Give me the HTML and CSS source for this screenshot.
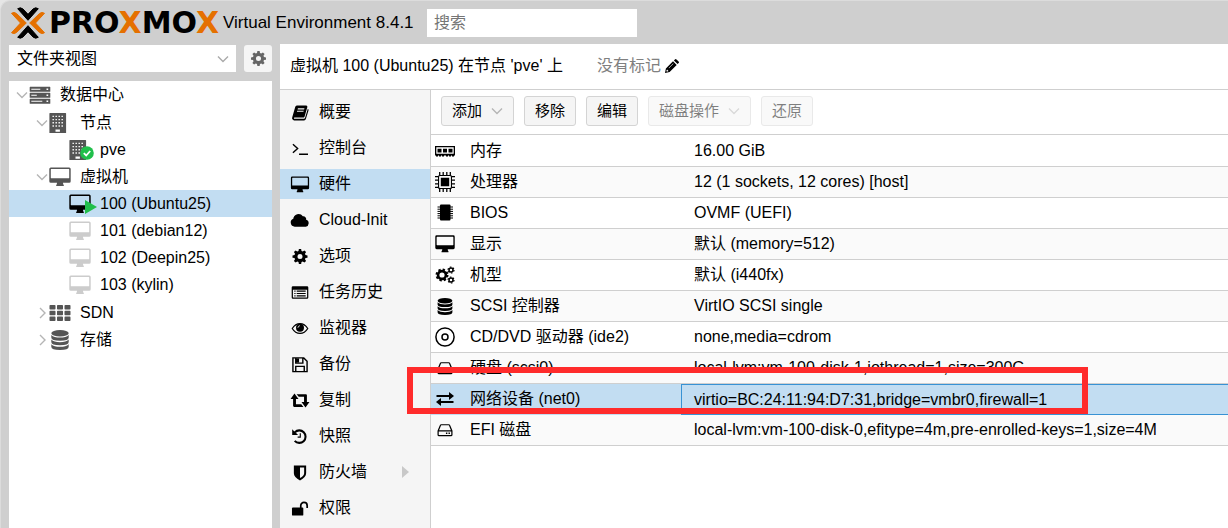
FILE: index.html
```html
<!DOCTYPE html>
<html lang="zh-CN">
<head>
<meta charset="utf-8">
<title>Proxmox Virtual Environment</title>
<link rel="stylesheet" href="styles.css">
</head>
<body>
<svg class="sprite" aria-hidden="true">
  <symbol id="chev-down" viewBox="0 0 12 12"><path d="M1 3.5l5 5 5-5" fill="none" stroke="currentColor" stroke-width="1.4"/></symbol>
  <symbol id="chev-right" viewBox="0 0 12 12"><path d="M4 1l5 5-5 5" fill="none" stroke="currentColor" stroke-width="1.4"/></symbol>
  <symbol id="gear" viewBox="0 0 16 16"><path fill-rule="evenodd" d="M6.8 0h2.4l.4 2.1 1.3.55L12.7 1.5l1.8 1.8-1.2 1.8.55 1.3L16 6.8v2.4l-2.15.4-.55 1.3 1.2 1.8-1.8 1.8-1.8-1.2-1.3.55L9.2 16H6.8l-.4-2.15-1.3-.55-1.8 1.2-1.8-1.8 1.2-1.8-.55-1.3L0 9.2V6.8l2.15-.4.55-1.3-1.2-1.8 1.8-1.8 1.8 1.15 1.3-.55zM8 5.3a2.7 2.7 0 1 0 0 5.4 2.7 2.7 0 0 0 0-5.4z"/></symbol>
  <symbol id="server" viewBox="0 0 22 18"><path fill-rule="evenodd" d="M1.200.7h19.600q.5 0 .5.5v4q0 .5-.5.500H1.200q-.5 0-.5-.5v-4q0-.5.5-.5zM2.300 2.700v1h9v-1zM17.500 2.500v1.400h1.700V2.500zM1.200 6.700h19.600q.5 0 .5.500v4q0 .5-.5.500H1.200q-.5 0-.5-.5v-4q0-.5.5-.5zM2.300 8.700v1h5.500v-1zM17.500 8.500v1.400h1.700V8.500zM1.200 12.700h19.600q.5 0 .5.500v4q0 .5-.5.500H1.200q-.5 0-.5-.5v-4q0-.5.5-.5zM2.300 14.700v1h11v-1zM17.500 14.500v1.400h1.700v-1.400z"/></symbol>
  <symbol id="building" viewBox="0 0 18 20"><path fill-rule="evenodd" d="M1 0h15.500q.6 0 .6.6V20H.4V.6Q.4 0 1 0zM3.500 2.700v1.400h1.400V2.700zm3 0v1.400h1.400V2.700zm3 0v1.400h1.400V2.700zm3 0v1.400h1.400V2.700zM3.500 5.900v1.400h1.400V5.900zm3 0v1.400h1.400V5.900zm3 0v1.400h1.400V5.900zm3 0v1.400h1.400V5.900zM3.500 9.100v1.400h1.400V9.100zm3 0v1.400h1.400V9.100zm3 0v1.400h1.400V9.100zm3 0v1.400h1.400V9.100zM3.500 12.300v1.400h1.400v-1.400zm3 0v1.400h1.400v-1.400zm3 0v1.400h1.400v-1.400zm3 0v1.400h1.400v-1.400zM6.500 16.500v2.200h4.400v-2.200z"/></symbol>
  <symbol id="desktop" viewBox="0 0 22 20"><path fill-rule="evenodd" d="M1.800.5h18.400q1.500 0 1.500 1.500v12.200q0 1.500-1.500 1.500H14q0 1.700.8 2.300v1H7.200v-1q.8-.6.8-2.300H1.800q-1.500 0-1.500-1.500V2Q.3.500 1.800.5zM2.300 2q-.5 0-.5.5v8.300q0 .5.5.5h17.400q.5 0 .5-.5V2.500q0-.5-.5-.5z"/></symbol>
  <symbol id="grid" viewBox="0 0 22 18"><path d="M1.300 1h4.400q.8 0 .8.800v2.900q0 .8-.8.800H1.300q-.8 0-.8-.8V1.800q0-.8.8-.8zm7.500 0h4.400q.8 0 .8.800v2.900q0 .8-.8.800H8.800q-.8 0-.8-.8V1.800q0-.8.8-.8zm7.500 0h4.400q.8 0 .8.800v2.900q0 .8-.8.800h-4.400q-.8 0-.8-.8V1.800q0-.8.8-.8zM1.300 6.800h4.400q.8 0 .8.800v2.900q0 .8-.8.800H1.300q-.8 0-.8-.8V7.600q0-.8.8-.8zm7.500 0h4.400q.8 0 .8.800v2.900q0 .8-.8.800H8.800q-.8 0-.8-.8V7.600q0-.8.8-.8zm7.500 0h4.400q.8 0 .8.800v2.900q0 .8-.8.800h-4.400q-.8 0-.8-.8V7.600q0-.8.8-.8zM1.300 12.600h4.400q.8 0 .8.800v2.900q0 .8-.8.800H1.300q-.8 0-.8-.8v-2.900q0-.8.8-.8zm7.500 0h4.400q.8 0 .8.800v2.900q0 .8-.8.800H8.800q-.8 0-.8-.8v-2.900q0-.8.8-.8zm7.500 0h4.400q.8 0 .8.800v2.900q0 .8-.8.800h-4.400q-.8 0-.8-.8v-2.900q0-.8.8-.8z"/></symbol>
  <symbol id="database" viewBox="0 0 18 20"><ellipse cx="9" cy="3.200" rx="8.700" ry="3.200"/><path d="M.3 5q2.700 2.600 8.700 2.600T17.700 5v2.500q0 3.200-8.700 3.200T.3 7.500zM.3 9.600q2.700 2.600 8.700 2.600t8.700-2.600v2.500q0 3.200-8.700 3.200T.3 12.100zM.3 14.200q2.700 2.600 8.700 2.600t8.700-2.600v2.500q0 3.200-8.700 3.200T.3 16.700z"/></symbol>
  <symbol id="pencil" viewBox="0 0 14 14"><path fill-rule="evenodd" d="M0 14l.9-4.600L8 2.300 11.700 6l-7.100 7.100zM1.500 11.200v1.300H2.800l.7-.6-1.400-1.400zM3.600 8.900l.4.400 4.500-4.500-.4-.4zM8.900 1.400l1-1q.8-.8 1.600 0l2.100 2.100q.8.8 0 1.600l-1 1z"/></symbol>
  <symbol id="book" viewBox="0 0 18 18"><path fill-rule="evenodd" d="M5.600 1.500h10q1.400.1 1.200 1.600l-3 10.300q-.4 1-1.600 1H3.400q-1.200.1-.8.900.1.400.9.400h9.600q.9 0 1.200-.8l3-9.900q1.100.6.7 1.800L15.200 16q-.5 1.400-1.900 1.400H2.900q-1.400 0-2.100-1.400-.4-1 0-2L4 3q.5-1.400 1.600-1.500zm1.200 3.100l-.3 1.100h6.900l.3-1.100zm-.8 2.600l-.3 1.100h6.900l.3-1.100z"/></symbol>
  <symbol id="terminal" viewBox="0 0 18 18"><path d="M1.500 4.500l5 4.500-5 4.500M8 15h9.500" fill="none" stroke="currentColor" stroke-width="1.500"/></symbol>
  <symbol id="cloud" viewBox="0 0 20 18"><path d="M4.500 15.500A4.300 4.300 0 0 1 2.900 7.200 5.500 5.500 0 0 1 13 4.600a3 3 0 0 1 3.500 3.700 3.700 3.700 0 0 1-.4 7.200z"/></symbol>
  <symbol id="list" viewBox="0 0 18 18"><path fill-rule="evenodd" d="M1.500 2.500h15q1.300 0 1.300 1.300v10.500q0 1.300-1.300 1.300h-15q-1.300 0-1.300-1.300V3.800q0-1.300 1.300-1.300zM1.500 6v8.300h15V6zM3 7h1.300v1.200H3zm2.500 0H15v1.200H5.500zM3 9.500h1.300v1.200H3zm2.500 0H15v1.200H5.500zM3 12h1.300v1.200H3zm2.500 0H15v1.200H5.500z"/></symbol>
  <symbol id="eye" viewBox="0 0 18 18"><path d="M.8 9Q4 3.800 9 3.800T17.200 9Q14 14.200 9 14.200T.8 9z" fill="none" stroke="currentColor" stroke-width="1.300"/><circle cx="9" cy="8.300" r="4.200"/><path d="M6.800 8.200Q7 6.300 8.900 6" fill="none" stroke="#f5f5f5" stroke-width=".9"/></symbol>
  <symbol id="floppy" viewBox="0 0 18 18"><path d="M1.500 2H13l3.500 3.500v11h-15zM4.500 16.500V11h9v5.500M4.500 2v5.500H12V2" fill="none" stroke="currentColor" stroke-width="1.500"/><path d="M4.500 2.500H8V7H4.500z"/></symbol>
  <symbol id="retweet" viewBox="0 0 18 16"><path d="M3.800 1.500L.1 6.500h2.400V13q0 1 1 1h8.700l-2-2.500H5.200v-5h2.400zM14.200 14.500l3.700-5h-2.400V3q0-1-1-1H5.800l2 2.500h5v5h-2.400z"/></symbol>
  <symbol id="history" viewBox="0 0 18 18"><path d="M3.500 4.600a6.600 6.600 0 1 1-.1 9" fill="none" stroke="currentColor" stroke-width="2.200"/><path d="M.7 1.200v6.300H7z"/><path d="M9.300 5.500v4.200H6.500" fill="none" stroke="currentColor" stroke-width="1.200"/></symbol>
  <symbol id="shield" viewBox="0 0 18 18"><path fill-rule="evenodd" d="M2.500 1.500h13v8.300q0 4.300-6.500 7.700-6.500-3.400-6.500-7.700zM9 3.700v11.200q4.400-2.500 4.400-5.200v-6z"/></symbol>
  <symbol id="unlock" viewBox="0 0 18 18"><rect x=".5" y="8" width="12" height="8.500" rx="1"/><path d="M9.800 8.500V6a3.400 3.400 0 0 1 6.800 0v2.500" fill="none" stroke="currentColor" stroke-width="1.800"/></symbol>
  <symbol id="memory" viewBox="0 0 20 20"><path fill-rule="evenodd" d="M0 5h20v9.500h-1v1h-2v-1h-1v1h-2v-1h-1v1h-2v-1H9v1H7v-1H6v1H4v-1H3v1H1v-1H0zm1.300 1.300v6.400h17.400V6.300zM2.500 7.800h4v3.700h-4zm5.500 0h4v3.700H8zm5.500 0h4v3.700h-4z"/></symbol>
  <symbol id="cpu" viewBox="0 0 20 20"><path fill-rule="evenodd" d="M3 4.500Q3 3 4.500 3h11Q17 3 17 4.500v11q0 1.500-1.500 1.500h-11Q3 17 3 15.500zm1.100.5v10q0 .9.900.9h10q.9 0 .9-.9V5q0-.9-.9-.9H5q-.9 0-.9.900zM5.800 5.800h8.400v8.400H5.800z"/><path d="M4.700 0v3M8.200 0v3M11.800 0v3M15.300 0v3M4.700 17v3M8.200 17v3M11.800 17v3M15.300 17v3M0 4.700h3M0 8.200h3M0 11.800h3M0 15.300h3M17 4.700h3M17 8.200h3M17 11.800h3M17 15.300h3" stroke="currentColor" stroke-width="1.300"/></symbol>
  <symbol id="chip" viewBox="0 0 20 20"><rect x="5" y="1.500" width="10.500" height="16" rx="1"/><path d="M2.500 4h15.500M2.500 6.200h15.500M2.500 8.400h15.500M2.500 10.600h15.500M2.500 12.800h15.500M2.500 15h15.500" stroke="currentColor" stroke-width="1"/></symbol>
  <symbol id="gears" viewBox="0 0 20 18"><circle cx="7" cy="9" r="3.900" fill="none" stroke="currentColor" stroke-width="2.600"/><circle cx="7" cy="9" r="5.500" fill="none" stroke="currentColor" stroke-width="2" stroke-dasharray="2.300 2.020"/><circle cx="16" cy="4" r="2" fill="none" stroke="currentColor" stroke-width="1.500"/><circle cx="16" cy="4" r="3" fill="none" stroke="currentColor" stroke-width="1.200" stroke-dasharray="1.600 1.540"/><circle cx="16" cy="14" r="2" fill="none" stroke="currentColor" stroke-width="1.500"/><circle cx="16" cy="14" r="3" fill="none" stroke="currentColor" stroke-width="1.200" stroke-dasharray="1.600 1.540"/></symbol>
  <symbol id="disc" viewBox="0 0 20 20"><g fill="none" stroke="currentColor" stroke-width="1.500"><circle cx="10" cy="10" r="9.100"/><circle cx="10" cy="10" r="3"/></g></symbol>
  <symbol id="hdd" viewBox="0 0 18 18"><path d="M1.700 9.500L4.200 3.500q.2-.6.900-.6h7.800q.7 0 .9.600l2.500 6v4q0 1-1 1H2.700q-1 0-1-1zM1.700 9.500h14.600" fill="none" stroke="currentColor" stroke-width="1.300"/><path d="M10 11.200h1.500v1.500H10zm2.700 0h1.500v1.500h-1.500z"/></symbol>
  <symbol id="exchange" viewBox="0 0 20 16"><path d="M1.500 4H14V1l5 4-5 4V6H1.500zM18.500 10H6V7l-5 4 5 4v-3h12.500z"/></symbol>
</svg>

<header class="topbar">
  <div class="brand">
    <svg class="brand-mark" viewBox="0 0 38 34" role="img" aria-label="Proxmox">
      <path class="mark-shape orange" d="M2.500 7.300Q5 5.500 7.500 7.500L17.300 17 7.500 26.500Q5 28.500 2.500 26.700L11.500 17zM35.500 7.300Q33 5.500 30.500 7.500L20.700 17l9.800 9.500q2.500 2 5 .2L26.500 17z"/>
      <path class="mark-shape" d="M8.700 2.700Q11.500.8 14 3l5 5.300L24 3q2.500-2.200 5.300-.3L19 14.300zM8.700 31.300q2.800 1.900 5.300-.3l5-5.300 5 5.300q2.500 2.200 5.300.3L19 19.700z"/>
    </svg>
    <span class="brand-name">PRO<span class="brand-x">X</span>MO<span class="brand-x">X</span></span>
  </div>
  <span class="version">Virtual Environment 8.4.1</span>
  <input class="search" type="text" placeholder="搜索" aria-label="搜索">
</header>

<div class="workspace">
  <aside class="sidebar">
    <div class="view-bar">
      <div class="view-picker">
        <select class="view-select" aria-label="视图"><option>文件夹视图</option></select>
        <svg class="view-arrow"><use href="#chev-down"/></svg>
      </div>
      <button class="gear-button" type="button" aria-label="设置"><svg class="gear-icon"><use href="#gear"/></svg></button>
    </div>
    <ul class="tree">
      <li><div class="node"><svg class="twisty"><use href="#chev-down"/></svg><svg class="node-icon"><use href="#server"/></svg><span>数据中心</span></div>
        <ul class="branch">
          <li><div class="node"><svg class="twisty"><use href="#chev-down"/></svg><svg class="node-icon left"><use href="#building"/></svg><span>节点</span></div>
            <ul>
              <li><div class="node leaf"><span class="badged"><svg class="node-icon left"><use href="#building"/></svg><svg class="badge-ok" viewBox="0 0 14 14"><circle cx="7" cy="7" r="6.800" fill="#21bf4b"/><path d="M3.800 7.200l2.400 2.300 4-4.500" fill="none" stroke="#fff" stroke-width="1.800"/></svg></span><span>pve</span></div></li>
            </ul>
          </li>
          <li><div class="node"><svg class="twisty"><use href="#chev-down"/></svg><svg class="node-icon"><use href="#desktop"/></svg><span>虚拟机</span></div>
            <ul class="guests">
              <li><div class="node leaf selected"><span class="badged running"><svg class="node-icon"><use href="#desktop"/></svg><svg class="badge-run" viewBox="0 0 12 14"><path d="M0 0l12 7-12 7z" fill="#21bf4b"/></svg></span><span>100 (Ubuntu25)</span></div></li>
              <li><div class="node leaf"><svg class="node-icon stopped"><use href="#desktop"/></svg><span>101 (debian12)</span></div></li>
              <li><div class="node leaf"><svg class="node-icon stopped"><use href="#desktop"/></svg><span>102 (Deepin25)</span></div></li>
              <li><div class="node leaf"><svg class="node-icon stopped"><use href="#desktop"/></svg><span>103 (kylin)</span></div></li>
            </ul>
          </li>
          <li><div class="node"><svg class="twisty"><use href="#chev-right"/></svg><svg class="node-icon"><use href="#grid"/></svg><span>SDN</span></div></li>
          <li><div class="node"><svg class="twisty"><use href="#chev-right"/></svg><svg class="node-icon"><use href="#database"/></svg><span>存储</span></div></li>
        </ul>
      </li>
    </ul>
  </aside>

  <main class="panel">
    <div class="panel-title">
      <h1 class="title">虚拟机 100 (Ubuntu25) 在节点 'pve' 上</h1>
      <span class="tags">没有标记</span>
      <button class="edit-tags" type="button" aria-label="编辑标记"><svg class="pencil"><use href="#pencil"/></svg></button>
    </div>
    <div class="panel-body">
      <nav class="menu">
        <a class="menu-item" href="#summary"><svg class="menu-icon"><use href="#book"/></svg>概要</a>
        <a class="menu-item" href="#console"><svg class="menu-icon"><use href="#terminal"/></svg>控制台</a>
        <a class="menu-item selected" href="#hardware"><svg class="menu-icon"><use href="#desktop"/></svg>硬件</a>
        <a class="menu-item" href="#cloudinit"><svg class="menu-icon"><use href="#cloud"/></svg>Cloud-Init</a>
        <a class="menu-item" href="#options"><svg class="menu-icon small"><use href="#gear"/></svg>选项</a>
        <a class="menu-item" href="#tasks"><svg class="menu-icon"><use href="#list"/></svg>任务历史</a>
        <a class="menu-item" href="#monitor"><svg class="menu-icon"><use href="#eye"/></svg>监视器</a>
        <a class="menu-item" href="#backup"><svg class="menu-icon"><use href="#floppy"/></svg>备份</a>
        <a class="menu-item" href="#replication"><svg class="menu-icon"><use href="#retweet"/></svg>复制</a>
        <a class="menu-item" href="#snapshots"><svg class="menu-icon"><use href="#history"/></svg>快照</a>
        <a class="menu-item" href="#firewall"><svg class="menu-icon"><use href="#shield"/></svg>防火墙<span class="submenu-arrow"></span></a>
        <a class="menu-item" href="#permissions"><svg class="menu-icon"><use href="#unlock"/></svg>权限</a>
      </nav>
      <section class="hardware">
        <div class="toolbar">
          <button class="tool" type="button">添加<svg class="tool-arrow"><use href="#chev-down"/></svg></button>
          <button class="tool" type="button">移除</button>
          <button class="tool" type="button">编辑</button>
          <button class="tool" type="button" disabled>磁盘操作<svg class="tool-arrow"><use href="#chev-down"/></svg></button>
          <button class="tool" type="button" disabled>还原</button>
        </div>
        <table class="devices">
          <tbody>
            <tr><th scope="row"><div class="device"><svg class="device-icon"><use href="#memory"/></svg>内存</div></th><td>16.00 GiB</td></tr>
            <tr><th scope="row"><div class="device"><svg class="device-icon"><use href="#cpu"/></svg>处理器</div></th><td>12 (1 sockets, 12 cores) [host]</td></tr>
            <tr><th scope="row"><div class="device"><svg class="device-icon"><use href="#chip"/></svg>BIOS</div></th><td>OVMF (UEFI)</td></tr>
            <tr><th scope="row"><div class="device"><svg class="device-icon"><use href="#desktop"/></svg>显示</div></th><td>默认 (memory=512)</td></tr>
            <tr><th scope="row"><div class="device"><svg class="device-icon"><use href="#gears"/></svg>机型</div></th><td>默认 (i440fx)</td></tr>
            <tr><th scope="row"><div class="device"><svg class="device-icon short"><use href="#database"/></svg>SCSI 控制器</div></th><td>VirtIO SCSI single</td></tr>
            <tr><th scope="row"><div class="device"><svg class="device-icon"><use href="#disc"/></svg>CD/DVD 驱动器 (ide2)</div></th><td>none,media=cdrom</td></tr>
            <tr><th scope="row"><div class="device"><svg class="device-icon short"><use href="#hdd"/></svg>硬盘 (scsi0)</div></th><td>local-lvm:vm-100-disk-1,iothread=1,size=300G</td></tr>
            <tr class="selected"><th scope="row"><div class="device"><svg class="device-icon"><use href="#exchange"/></svg>网络设备 (net0)</div><span class="highlight"></span></th><td>virtio=BC:24:11:94:D7:31,bridge=vmbr0,firewall=1</td></tr>
            <tr><th scope="row"><div class="device"><svg class="device-icon short"><use href="#hdd"/></svg>EFI 磁盘</div></th><td>local-lvm:vm-100-disk-0,efitype=4m,pre-enrolled-keys=1,size=4M</td></tr>
          </tbody>
        </table>
      </section>
    </div>
  </main>
</div>
</body>
</html>
```

FILE: styles.css
```css
* { box-sizing: border-box; }

html { background: #e6e6e6; }

body {
  margin: 0;
  min-height: 100vh;
  display: flex;
  flex-direction: column;
  background: #cfcfcf;
  border-top: 1px solid #dcdcdc;
  border-left: 1px solid #dcdcdc;
  border-top-left-radius: 10px;
  color: #000;
  font: 16px/24px "Liberation Sans", "Noto Sans CJK SC", sans-serif;
  overflow-x: hidden;
}

button, input, select { font: inherit; color: inherit; margin: 0; }
svg { display: block; fill: currentColor; flex: none; }
ul { list-style: none; margin: 0; padding: 0; }
.sprite { position: absolute; width: 0; height: 0; }

/* Top bar */
.topbar { display: flex; align-items: center; height: 43px; padding-left: 8px; }
.brand { display: flex; align-items: center; gap: 2px; width: 214px; }
.brand-mark { width: 38px; height: 34px; }
.mark-shape { fill: #000; stroke: #000; stroke-width: 1; stroke-linejoin: round; }
.mark-shape.orange { fill: #e57000; stroke: #e57000; }
.brand-name { font: bold 30px/34px "DejaVu Sans", sans-serif; }
.brand-x { color: #e57000; }
.version { width: 204px; font-size: 17px; white-space: nowrap; }
.search { width: 210px; height: 28px; padding: 0 7px; border: 0; background: #fff; }
.search::placeholder { color: #757575; opacity: 1; }

.workspace { flex: 1; display: flex; }

/* Resource tree */
.sidebar { display: flex; flex-direction: column; gap: 9px; flex: none; width: 271px; padding: 1px 0 0 8px; }
.view-bar { display: flex; gap: 8px; }
.view-picker { position: relative; flex: 1; }
.view-select { display: block; width: 100%; height: 27px; padding: 0 8px; border: 0; border-radius: 0; background: #fff; appearance: none; }
.view-arrow { position: absolute; right: 7px; top: 8px; width: 12px; height: 12px; color: #aaa; pointer-events: none; }
.gear-button { display: grid; place-items: center; width: 28px; height: 27px; padding: 0; border: 0; border-radius: 3px; background: #f5f5f5; color: #666; }
.gear-icon { width: 15px; height: 15px; }
.tree { flex: 1; background: #fff; }
.branch { padding-top: 1px; }
.guests { padding-bottom: 1px; }
.node { display: flex; align-items: center; height: 27px; padding-left: 7px; white-space: nowrap; }
.branch .node { padding-left: 27px; }
.branch .leaf { padding-left: 60px; }
.node.selected { background: #c2ddf2; }
.twisty { width: 12px; height: 12px; margin-right: 1px; color: #b5b5b5; }
.node-icon { width: 22px; height: 20px; margin-right: 9px; color: #555; }
.node-icon.left { padding-right: 4px; }
.node-icon.stopped { color: #ccc; }
.badged { position: relative; }
.running .node-icon { color: #000; }
.badge-ok { position: absolute; left: 11px; top: 6px; width: 14px; height: 14px; }
.badge-run { position: absolute; left: 16px; top: 6px; width: 12px; height: 14px; }

/* Content panel */
.panel { flex: 1; min-width: 0; display: flex; flex-direction: column; margin-left: 8px; background: #fff; }
.panel-title { display: flex; align-items: center; height: 46px; padding: 0 10px 2px; border-bottom: 1px solid #cfcfcf; }
.title { margin: 0 34px 0 0; font-size: 16px; font-weight: 400; white-space: nowrap; }
.tags { color: #808080; }
.edit-tags { margin-left: 4px; padding: 0; border: 0; background: none; }
.pencil { width: 14px; height: 14px; }
.panel-body { flex: 1; display: flex; }

/* Section menu */
.menu { flex: none; display: flex; flex-direction: column; gap: 6px; width: 151px; padding: 7px 0 4px; background: #f5f5f5; border-right: 1px solid #cfcfcf; }
.menu-item { display: flex; align-items: center; height: 30px; padding: 0 21px 0 10px; color: #000; text-decoration: none; }
.menu-item.selected { background: #c2ddf2; }
.menu-icon { width: 20px; height: 17px; margin-right: 9px; }
.menu-icon.small { padding: 1px 0; }
.submenu-arrow { margin-left: auto; border: 6px solid transparent; border-left: 7px solid #c8c8c8; border-right: 0; }

/* Hardware list */
.hardware { flex: 1; min-width: 0; }
.toolbar { display: flex; align-items: center; gap: 10px; height: 45px; padding: 0 10px 2px; border-bottom: 1px solid #cfcfcf; }
.tool { display: flex; align-items: center; height: 30px; padding: 0 10px; border: 1px solid #d4d4d4; border-radius: 3px; background: #f5f5f5; font-size: 15px; white-space: nowrap; }
.tool:disabled { opacity: .5; color: #000; }
.tool-arrow { width: 12px; height: 12px; margin-left: 9px; color: #b5b5b5; }
.devices { width: 100%; margin-top: 1px; border-collapse: separate; border-spacing: 0; table-layout: fixed; }
.devices th, .devices td { height: 31px; padding: 0; border-bottom: 1px solid #cfcfcf; font-weight: 400; text-align: left; white-space: nowrap; }
.devices th { position: relative; width: 250px; padding-left: 4px; }
.devices td { padding-left: 13px; }
.devices tr:nth-child(even) { background: #fafafa; }
.devices tr.selected { background: #c2ddf2; }
.devices .selected th { border-bottom-color: #c2ddf2; }
.devices .selected td { padding-left: 12px; border: 1px solid #3892d4; border-right: 0; line-height: 22px; }
.device { display: flex; align-items: center; }
.device-icon { width: 20px; height: 20px; margin-right: 15px; }
.device-icon.short { height: 17px; }
.highlight { position: absolute; z-index: 1; left: -24px; top: -17px; width: 681px; height: 47px; border: 6px solid #ff2b2b; pointer-events: none; }
```
